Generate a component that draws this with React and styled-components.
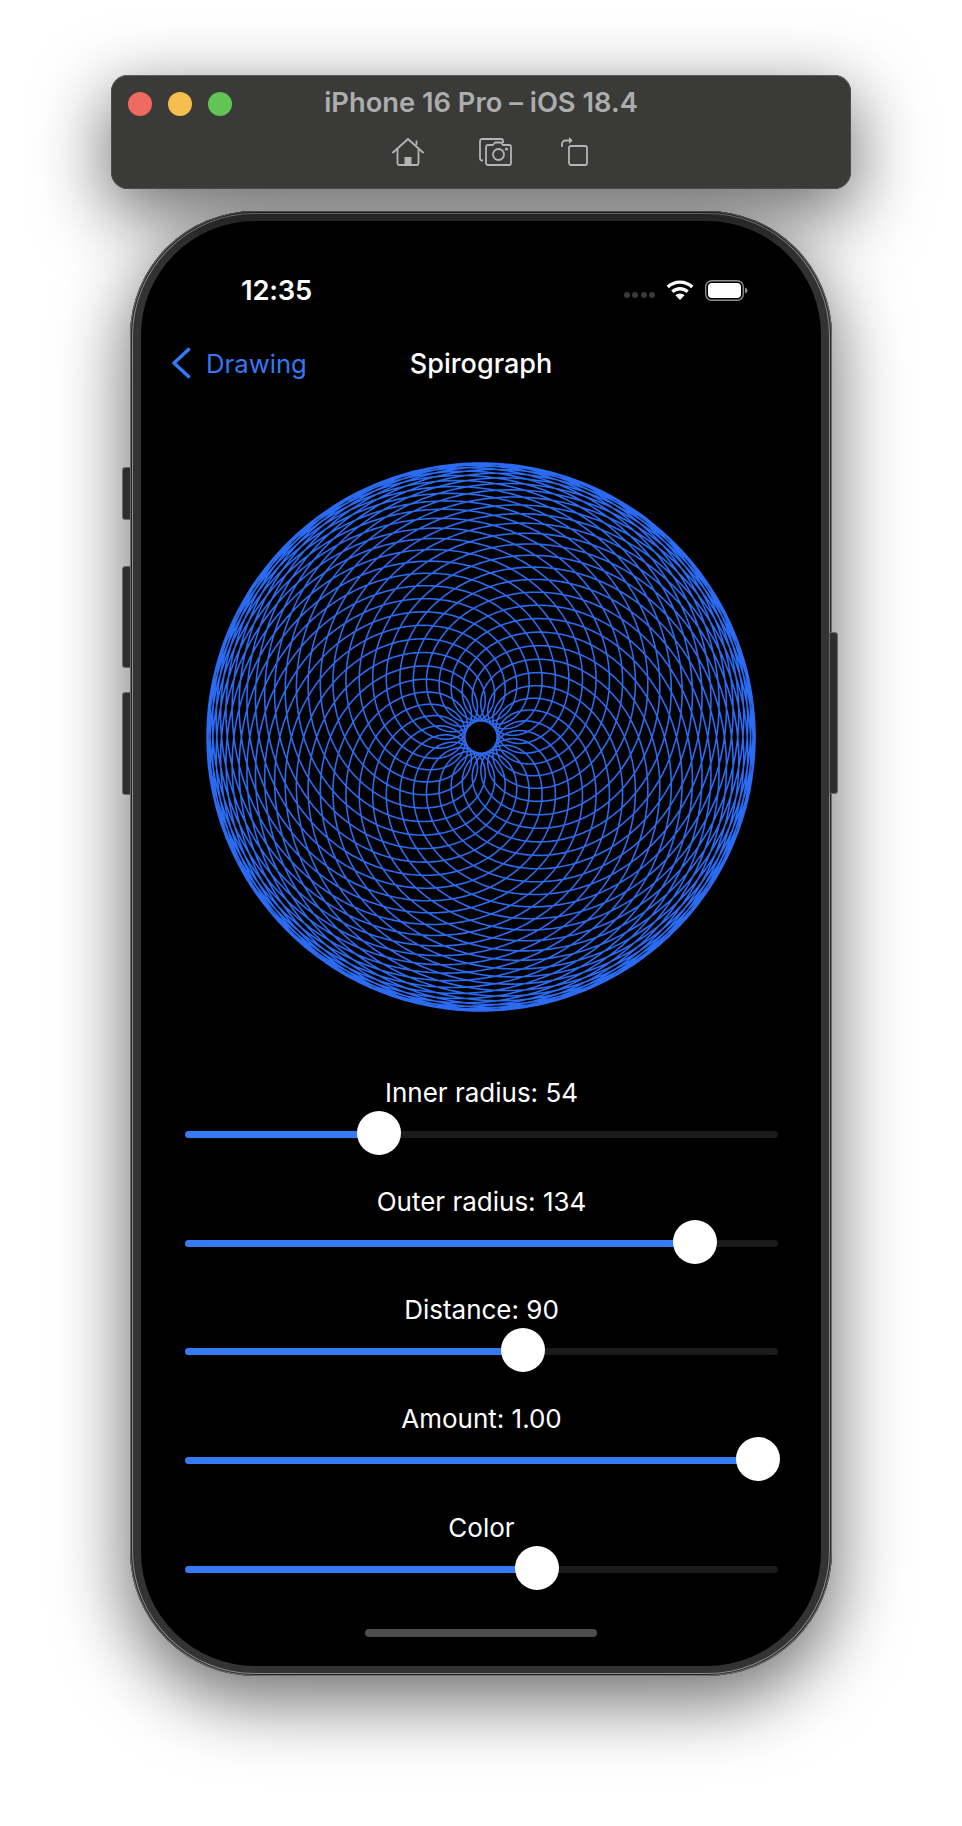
import React, { useMemo } from 'react';
import styled, { createGlobalStyle } from 'styled-components';

const GlobalStyle = createGlobalStyle`
  html, body {
    margin: 0;
    padding: 0;
    background: #fff;
  }
  body {
    font-family: Inter, "Noto Sans", "Liberation Sans", sans-serif;
  }
`;

const Page = styled.div`
  box-sizing: border-box;
  width: 962px;
  height: 1826px;
  padding-top: 75px;
  overflow: hidden;
`;

const TitleBar = styled.div`
  position: relative;
  z-index: 2;
  box-sizing: border-box;
  width: 740px;
  height: 114px;
  margin-left: 111px;
  border-radius: 17px;
  background: #3a3a39;
  box-shadow: 0 1px 0 0 #5f5f5f inset, 0 0 0 1px #4c4c4c inset, 0 22px 70px 4px rgba(0, 0, 0, 0.56);
  display: flex;
  flex-direction: column;
  align-items: center;
`;

const Lights = styled.div`
  position: absolute;
  left: 17px;
  top: 17px;
  display: flex;
  gap: 16px;
`;

const Light = styled.span`
  width: 24px;
  height: 24px;
  border-radius: 50%;
  background: ${(p) => p.$color};
`;

const DeviceName = styled.div`
  margin-top: 13px;
  font-size: 27.3px;
  line-height: 30px;
  font-weight: 600;
  color: #adadad;
  white-space: nowrap;
`;

const ToolIcons = styled.div`
  display: flex;
  align-items: flex-end;
  gap: 49px;
  margin-top: 18px;
  margin-left: 18px;

  svg:first-child {
    margin-right: 6px;
  }
`;

const Phone = styled.div`
  position: relative;
  box-sizing: border-box;
  width: 702px;
  height: 1465px;
  margin: 22px 0 0 130px;
  padding: 10px 11px;
  border-radius: 125px;
  background: #333;
  box-shadow: 0 0 0 1px #6e6e6e inset, 0 0 0 2px #242424 inset, 0 0 0 3px #8c8c8c inset,
    0 22px 70px 4px rgba(0, 0, 0, 0.56);
`;

const SideButton = styled.div`
  position: absolute;
  width: 9px;
  background: #2e2e2e;
  border: 1px solid #6a6a6a;
  box-sizing: border-box;
  ${(p) => (p.$right ? 'right: -6px; border-radius: 0 3px 3px 0;' : 'left: -8px; border-radius: 3px 0 0 3px;')}
  top: ${(p) => p.$top}px;
  height: ${(p) => p.$height}px;
`;

const Screen = styled.div`
  position: relative;
  height: 100%;
  border-radius: 114px;
  background: #000;
  color: #fff;
  display: flex;
  flex-direction: column;
  overflow: hidden;
`;

const StatusBar = styled.div`
  box-sizing: border-box;
  height: 118px;
  padding: 20px 73px 0 100px;
  display: flex;
  align-items: center;
  justify-content: space-between;
`;

const Clock = styled.span`
  font-size: 27.4px;
  font-weight: 600;
  letter-spacing: -0.2px;
`;

const StatusIcons = styled.div`
  display: flex;
  align-items: center;
  gap: 11px;
`;

const SignalDots = styled.div`
  display: flex;
  gap: 2.5px;
  margin-top: 9px;
`;

const SignalDot = styled.span`
  width: 6px;
  height: 6px;
  border-radius: 50%;
  background: #3a3a3a;
`;

const NavBar = styled.div`
  position: relative;
  height: 48px;
  display: flex;
  align-items: center;
  justify-content: center;
`;

const BackButton = styled.div`
  position: absolute;
  left: 30px;
  display: flex;
  align-items: center;
  gap: 15px;
  font-size: 25.7px;
  color: #3478f6;
`;

const NavTitle = styled.div`
  font-size: 27px;
  font-weight: 500;
`;

const Canvas = styled.div`
  display: flex;
  justify-content: center;
  margin-top: 75px;

  svg {
    display: block;
    overflow: visible;
  }
`;

const Controls = styled.div`
  display: flex;
  flex-direction: column;
  gap: 31.7px;
  margin-top: 66px;
  padding: 0 43px 0 44px;
`;

const Control = styled.div`
  display: flex;
  flex-direction: column;
  gap: 3px;
`;

const ControlLabel = styled.div`
  height: 30px;
  line-height: 30px;
  text-align: center;
  font-size: 26px;
`;

const Slider = styled.div`
  position: relative;
  height: 44px;
  display: flex;
  align-items: center;
`;

const Track = styled.div`
  width: 100%;
  height: 7px;
  margin-top: 3px;
  border-radius: 4px;
  background: #1b1b1b;
  overflow: hidden;
`;

const TrackFill = styled.div`
  height: 100%;
  background: #377af6;
`;

const Thumb = styled.div`
  position: absolute;
  top: 0;
  width: 44px;
  height: 44px;
  margin-left: -22px;
  border-radius: 50%;
  background: #fff;
`;

const HomeIndicator = styled.div`
  width: 232px;
  height: 8px;
  margin: auto auto 29px;
  border-radius: 4px;
  background: #4d4d4d;
`;

const HomeIcon = () => (
  <svg width="32" height="28" viewBox="0 0 32 28" fill="none" stroke="#b4b4b4" strokeWidth="1.8" strokeLinejoin="round">
    <path d="M1 14.5 16 1l15 13.5" strokeLinecap="round" />
    <path d="M24.500 7V2.500" />
    <path d="M5.500 11v14a2 2 0 0 0 2 2h17a2 2 0 0 0 2-2V11" />
    <rect x="12.500" y="19" width="7" height="8" fill="#b4b4b4" stroke="none" />
  </svg>
);

const CameraIcon = () => (
  <svg width="33" height="28" viewBox="0 0 33 28" fill="none" stroke="#b4b4b4" strokeWidth="1.8" strokeLinejoin="round">
    <path d="M4 22.500H3a2 2 0 0 1-2-2V3a2 2 0 0 1 2-2h19a2 2 0 0 1 2 2v2" />
    <path d="M7 9a2 2 0 0 1 2-2h5l2-2.500h6L24 7h6a2 2 0 0 1 2 2v16a2 2 0 0 1-2 2H9a2 2 0 0 1-2-2z" />
    <circle cx="19.500" cy="16.500" r="5.500" />
    <circle cx="27.500" cy="11" r="0.700" fill="#b4b4b4" />
  </svg>
);

const RotateIcon = () => (
  <svg width="27" height="30" viewBox="0 0 27 30" fill="none" stroke="#b4b4b4" strokeWidth="1.8" strokeLinejoin="round">
    <rect x="8" y="10" width="18" height="19" rx="2" />
    <path d="M1 11V8a3.500 3.500 0 0 1 3.500-3.500H11" />
    <path d="M8 1l3.500 3.500L8 8" fill="#b4b4b4" stroke="none" />
  </svg>
);

const WifiIcon = () => (
  <svg width="28" height="20" viewBox="0 0 28 20" fill="#fff">
    <path d="M14 0.500C8.800 0.500 4.100 2.500 0.600 5.800l2.300 2.400C5.800 5.500 9.700 3.800 14 3.800s8.200 1.700 11.100 4.400l2.300-2.400C23.900 2.500 19.200 0.500 14 0.500z" />
    <path d="M14 7.100c-3.400 0-6.500 1.300-8.800 3.400l2.400 2.400C9.300 11.400 11.500 10.400 14 10.400s4.700 1 6.400 2.500l2.400-2.400C20.500 8.400 17.400 7.100 14 7.100z" />
    <path d="M14 13.500c-1.800 0-3.400.7-4.600 1.800L14 20l4.600-4.700c-1.200-1.100-2.800-1.800-4.600-1.800z" />
  </svg>
);

const BatteryIcon = () => (
  <svg width="43" height="21" viewBox="0 0 43 21">
    <rect x="0.700" y="0.700" width="37.600" height="19.600" rx="6" fill="none" stroke="#8e8e8e" strokeWidth="1.400" />
    <rect x="3" y="3" width="33" height="15" rx="4" fill="#fff" />
    <path d="M40 7.500c1.500.5 2.500 1.600 2.500 3s-1 2.500-2.500 3z" fill="#8e8e8e" />
  </svg>
);

const ChevronIcon = () => (
  <svg width="20" height="32" viewBox="0 0 20 32" fill="none" stroke="#3478f6" strokeWidth="3.600" strokeLinecap="round" strokeLinejoin="round">
    <path d="M17.500 2.500 3 16l14.500 13.500" />
  </svg>
);

const Spirograph = ({ inner, outer, distance, color }) => {
  const d = useMemo(() => {
    const gcd = (a, b) => (b === 0 ? a : gcd(b, a % b));
    const divisor = gcd(inner, outer);
    const diff = inner - outer;
    const end = Math.ceil((2 * Math.PI * outer) / divisor);
    const scale = 274 / (Math.abs(diff) + distance);
    const points = [];
    for (let t = 0; t <= end; t += 0.02) {
      const x = diff * Math.cos(t) + distance * Math.cos((diff / outer) * t);
      const y = diff * Math.sin(t) - distance * Math.sin((diff / outer) * t);
      points.push(`${(275 + x * scale).toFixed(2)} ${(275 + y * scale).toFixed(2)}`);
    }
    return `M${points.join('L')}`;
  }, [inner, outer, distance]);

  return (
    <svg width="550" height="550" viewBox="0 0 550 550">
      <path d={d} fill="none" stroke={color} strokeWidth="1.600" />
    </svg>
  );
};

const controls = [
  { label: 'Inner radius: 54', value: 0.312 },
  { label: 'Outer radius: 134', value: 0.886 },
  { label: 'Distance: 90', value: 0.5735 },
  { label: 'Amount: 1.00', value: 1 },
  { label: 'Color', value: 0.599 },
];

export default function App() {
  return (
    <Page>
      <GlobalStyle />
      <TitleBar>
        <Lights>
          <Light $color="#ee6a5f" />
          <Light $color="#f5bf4f" />
          <Light $color="#61c454" />
        </Lights>
        <DeviceName>iPhone 16 Pro – iOS 18.4</DeviceName>
        <ToolIcons>
          <HomeIcon />
          <CameraIcon />
          <RotateIcon />
        </ToolIcons>
      </TitleBar>
      <Phone>
        <SideButton $top={256} $height={53} />
        <SideButton $top={355} $height={102} />
        <SideButton $top={481} $height={103} />
        <SideButton $right $top={421} $height={162} />
        <Screen>
          <StatusBar>
            <Clock>12:35</Clock>
            <StatusIcons>
              <SignalDots>
                <SignalDot />
                <SignalDot />
                <SignalDot />
                <SignalDot />
              </SignalDots>
              <WifiIcon />
              <BatteryIcon />
            </StatusIcons>
          </StatusBar>
          <NavBar>
            <BackButton>
              <ChevronIcon />
              Drawing
            </BackButton>
            <NavTitle>Spirograph</NavTitle>
          </NavBar>
          <Canvas>
            <Spirograph inner={54} outer={134} distance={90} color="#2a6bf2" />
          </Canvas>
          <Controls>
            {controls.map((c) => (
              <Control key={c.label}>
                <ControlLabel>{c.label}</ControlLabel>
                <Slider>
                  <Track>
                    <TrackFill style={{ width: `${c.value * 100}%` }} />
                  </Track>
                  <Thumb style={{ left: `calc(22px + (100% - 42px) * ${c.value})` }} />
                </Slider>
              </Control>
            ))}
          </Controls>
          <HomeIndicator />
        </Screen>
      </Phone>
    </Page>
  );
}
